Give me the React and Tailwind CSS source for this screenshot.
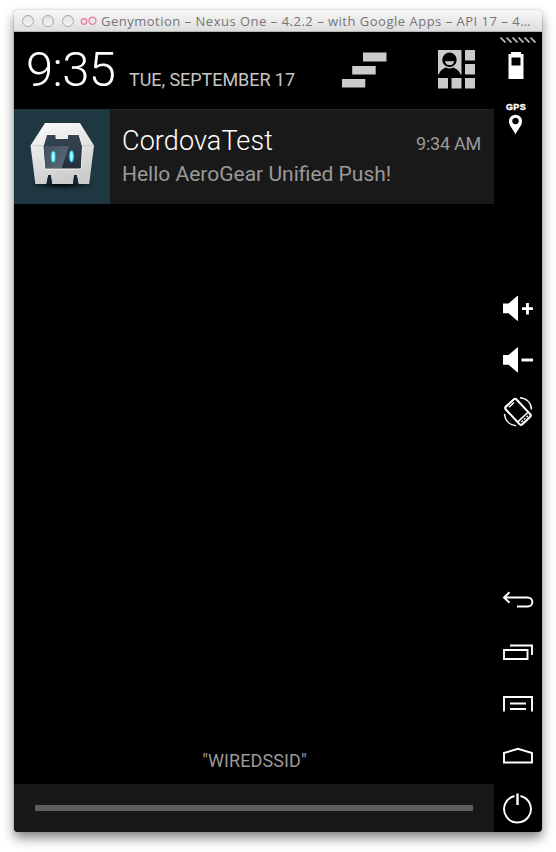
import React from "react";

const SideIcon = ({ top, height = 52, label, children }) => (
  <svg
    role="img"
    aria-label={label}
    width="48"
    height={height}
    viewBox={`494 ${top} 48 ${height}`}
    className="block shrink-0"
    fill="none"
    stroke="#fff"
    strokeWidth="2"
  >
    {children}
  </svg>
);

const Speaker = ({ y }) => (
  <path d={`M503 ${y - 5}h5.5l8.8 -7.4h.7v24.6h-.7l-8.8 -7.4h-5.5z`} fill="#fff" stroke="none" />
);

function TitleBar() {
  return (
    <div className="flex h-[22px] shrink-0 items-center rounded-t-[4px] border-b border-[#b4b4b4] bg-linear-to-b from-[#f8f8f8] to-[#dedede] pl-2">
      <div className="flex gap-2">
        {[0, 1, 2].map((i) => (
          <span key={i} className="h-3 w-3 rounded-full border border-[#a9a9a9] bg-linear-to-b from-[#e2e2e2] to-[#f5f5f5]" />
        ))}
      </div>
      <svg width="17" height="10" viewBox="0 0 17 10" className="ml-[6px] shrink-0" fill="none" stroke="#e97fa5" strokeWidth="1.4">
        <circle cx="4" cy="5.5" r="2.7" />
        <circle cx="12.5" cy="4.7" r="3.5" />
      </svg>
      <span className="ml-1 whitespace-nowrap font-['Open_Sans',sans-serif] text-[13px] leading-5 tracking-[0.5px] text-[#757575]">
        Genymotion – Nexus One – 4.2.2 – with Google Apps – API 17 – 4…
      </span>
    </div>
  );
}

function StatusHeader() {
  return (
    <div className="flex h-[77px] shrink-0">
      <div className="w-[115px] shrink-0 whitespace-nowrap pl-[12px] pt-[10px] text-[49px] font-light leading-[56px] tracking-[-0.6px] text-white">9:35</div>
      <div className="w-[213px] shrink-0 whitespace-nowrap pt-[37px] text-[18px] leading-[21px] tracking-[-0.05px] text-[#c6c6c6]">TUE, SEPTEMBER 17</div>
      <svg width="152" height="77" viewBox="342 32 152 77" fill="#cbcbcb">
        <path d="M363 52.5h23.5v9H363zM352.200 66h23.500v8.500h-23.500zM341.800 79h23.500v8.500h-23.500z" />
        <path d="M438 50h23.500v24.500H438z" />
        <path d="M465 50h10v10.500h-10zM465 64h10v10.500h-10zM465 78h10v10.500h-10zM438 78h10v10.500h-10zM451.500 78h10v10.500h-10z" />
        <circle cx="449.500" cy="59.800" r="7.200" fill="#000" />
        <path d="M438.500 75c1.500 -4.500 4 -6 7.500 -7.500c2.200 1.200 5 1.200 7.200 0c3.500 1.500 6 3 7.500 7.500z" fill="#000" />
        <path d="M445 61.200h9.200c-.6 2.800 -2.300 3.900 -4.600 3.900s-4 -1.100 -4.600 -3.900z" />
      </svg>
    </div>
  );
}

function AppIcon() {
  return (
    <svg width="96" height="95" viewBox="14 109 96 95" className="shrink-0 bg-[#1e3740]">
      <defs>
        <linearGradient id="shell" x1="0" y1="0" x2="0.3" y2="1">
          <stop offset="0" stopColor="#fbfbfb" />
          <stop offset="0.5" stopColor="#e5e5e5" />
          <stop offset="1" stopColor="#cccccc" />
        </linearGradient>
        <linearGradient id="screen" x1="0" y1="0" x2="0" y2="1">
          <stop offset="0" stopColor="#384552" />
          <stop offset="1" stopColor="#25303d" />
        </linearGradient>
        <radialGradient id="ground">
          <stop offset="0" stopColor="#000" stopOpacity="0.9" />
          <stop offset="1" stopColor="#000" stopOpacity="0" />
        </radialGradient>
        <linearGradient id="glare" x1="0" y1="0" x2="1" y2="1">
          <stop offset="0" stopColor="#8795a5" stopOpacity="0.2" />
          <stop offset="1" stopColor="#a0adb9" stopOpacity="0.5" />
        </linearGradient>
      </defs>
      <ellipse cx="62" cy="184" rx="33" ry="6" fill="url(#ground)" />
      <path d="M45 123h35l14 22.500l-4.800 38.500H78.500l-1.800 -9h-2.500l-1.200 9H52l-1.200 -9h-2.500l-1.800 9H35.300l-4.800 -38.500z" fill="url(#shell)" />
      <path d="M30.500 145.500l12.500 1v-1.500h-12.500zM94 145.500l-11.500 1v-1.500h11.500z" fill="#999" opacity="0.3" />
      <path d="M46.500 184l1.800 -9h2.500l1.200 9zM73 184l1.200 -9h2.500l1.800 9z" fill="#182329" />
      <path d="M46.700 134.500h9.300v4h11.500v-4H79l3.500 12l-1.200 22.500H44.800l-1.800 -22.500z" fill="url(#screen)" stroke="#f5f5f5" strokeWidth="1" />
      <path d="M44 146h25l-7.500 22.500h-16z" fill="url(#glare)" />
      <ellipse cx="53.300" cy="156.700" rx="3" ry="6.500" fill="#00bde5" opacity="0.45" />
      <ellipse cx="71.500" cy="156.300" rx="3" ry="6.500" fill="#00bde5" opacity="0.45" />
      <ellipse cx="53.300" cy="156.700" rx="1.700" ry="5.300" fill="#b8ffff" stroke="#25d8f2" strokeWidth="0.800" />
      <ellipse cx="71.500" cy="156.300" rx="1.700" ry="5.300" fill="#b8ffff" stroke="#25d8f2" strokeWidth="0.800" />
    </svg>
  );
}

function Notification() {
  return (
    <div className="flex h-[95px] shrink-0 bg-[#191919]">
      <AppIcon />
      <div className="flex-1 border-t border-[#252525] pl-3 pr-[13px] pt-[15px]">
        <div className="flex justify-between whitespace-nowrap">
          <span className="text-[27px] font-light leading-8 tracking-[0.1px] text-white">CordovaTest</span>
          <span className="pt-[8px] text-[18px] leading-[21px] tracking-[-0.25px] text-[#999]">9:34 AM</span>
        </div>
        <div className="mt-[5px] whitespace-nowrap text-[21px] leading-[25px] text-[#999]">Hello AeroGear Unified Push!</div>
      </div>
    </div>
  );
}

function Toolbar() {
  return (
    <div className="flex w-12 shrink-0 flex-col">
      <SideIcon top={32} height={14} label="Grip">
        {[0, 1, 2, 3, 4, 5].map((i) => (
          <path key={i} d={`M${500.500 + i * 6} 37.500l5 5`} stroke="#c4c4c4" strokeWidth="1.700" />
        ))}
      </SideIcon>
      <SideIcon top={46} label="Battery">
        <path fillRule="evenodd" d="M511 52h10v2h2.500v25h-15V54h2.500zM511.500 57.500v8h9v-8z" fill="#fff" stroke="none" />
      </SideIcon>
      <div className="relative h-[52px]">
        <span className="absolute inset-x-0 top-[3px] pr-[4px] text-center font-['Liberation_Sans',sans-serif] text-[9px] font-bold leading-[12px] tracking-[0.3px] text-white [-webkit-text-stroke:0.4px_white]">GPS</span>
        <SideIcon top={98} label="Location">
          <path fillRule="evenodd" d="M515.500 134.500c-2 -5 -6.500 -8.500 -6.500 -13.300a6.500 6.500 0 0 1 13 0c0 4.800 -4.500 8.300 -6.500 13.300zM515.500 117.700a3.300 3.300 0 1 0 .01 0z" fill="#fff" stroke="none" />
        </SideIcon>
      </div>
      <div className="h-[132px]" />
      <SideIcon top={282} label="Volume up">
        <Speaker y={308.500} />
        <path d="M522 308.700h11M527.500 303v11.500" strokeWidth="2.800" />
      </SideIcon>
      <SideIcon top={334} label="Volume down">
        <Speaker y={360} />
        <path d="M521.500 360h11.500" strokeWidth="3" />
      </SideIcon>
      <SideIcon top={386} label="Rotate">
        <g transform="rotate(-43 518 411.800)">
          <rect x="510.700" y="399.800" width="14.600" height="24" rx="2" strokeWidth="2.100" />
          <path d="M511 419h14" strokeWidth="1.500" />
          <path d="M513.500 421.500h2M517 421.500h2M520.500 421.500h2M514.500 402.300h7" strokeWidth="1.500" />
        </g>
        <path d="M520 397.800c6.500 .6 11 5 11.500 11.700M504.500 414c.5 6.500 5 11 11.500 11.800" strokeWidth="1.500" />
      </SideIcon>
      <div className="h-[136px]" />
      <SideIcon top={574} label="Back">
        <path d="M509.500 592.300l-5.500 5.200l5.500 5.200M504 597.500h23.500c6.500 0 6.500 9 0 9H517" strokeWidth="1.900" />
      </SideIcon>
      <SideIcon top={626} label="Recents">
        <path d="M504 650h23.500v9H504zM510 645.500h22v9.500" strokeWidth="1.900" />
      </SideIcon>
      <SideIcon top={678} label="Menu">
        <path d="M504 711.500V697h28v14.500M510 703.500h16M510 709h16" strokeWidth="1.900" />
      </SideIcon>
      <SideIcon top={730} label="Home">
        <path d="M504 762.500v-9.500l14 -4.200l14 4.200v9.500z" strokeWidth="1.900" />
      </SideIcon>
      <SideIcon top={782} height={50} label="Power">
        <path d="M514.500 796a13.400 13.400 0 1 0 6 0" strokeWidth="1.900" />
        <path d="M517.500 793.500v11.500" strokeWidth="2.400" />
      </SideIcon>
    </div>
  );
}

export default function App() {
  return (
    <main className="h-[852px] w-[556px] overflow-hidden bg-white px-[14px] pt-[10px] font-[Roboto,sans-serif]">
      <section className="flex h-[822px] w-[528px] flex-col rounded-[4px] shadow-[0_0_1px_rgba(0,0,0,0.6),0_6px_12px_rgba(0,0,0,0.48)]">
        <TitleBar />
        <div className="flex flex-1 overflow-hidden rounded-b-[4px] bg-black">
          <div className="flex w-[480px] flex-col">
            <StatusHeader />
            <Notification />
            <div className="flex flex-1 items-end justify-center pb-[13px] text-[18px] leading-[21px] tracking-[0.1px] text-[#999]">
              <span className="pl-px">"WIREDSSID"</span>
            </div>
            <div className="h-12 shrink-0 bg-[#171717] pl-[21px] pt-[21px]">
              <div className="h-[6px] w-[438px] bg-[#5d5d5d]" />
            </div>
          </div>
          <Toolbar />
        </div>
      </section>
    </main>
  );
}
